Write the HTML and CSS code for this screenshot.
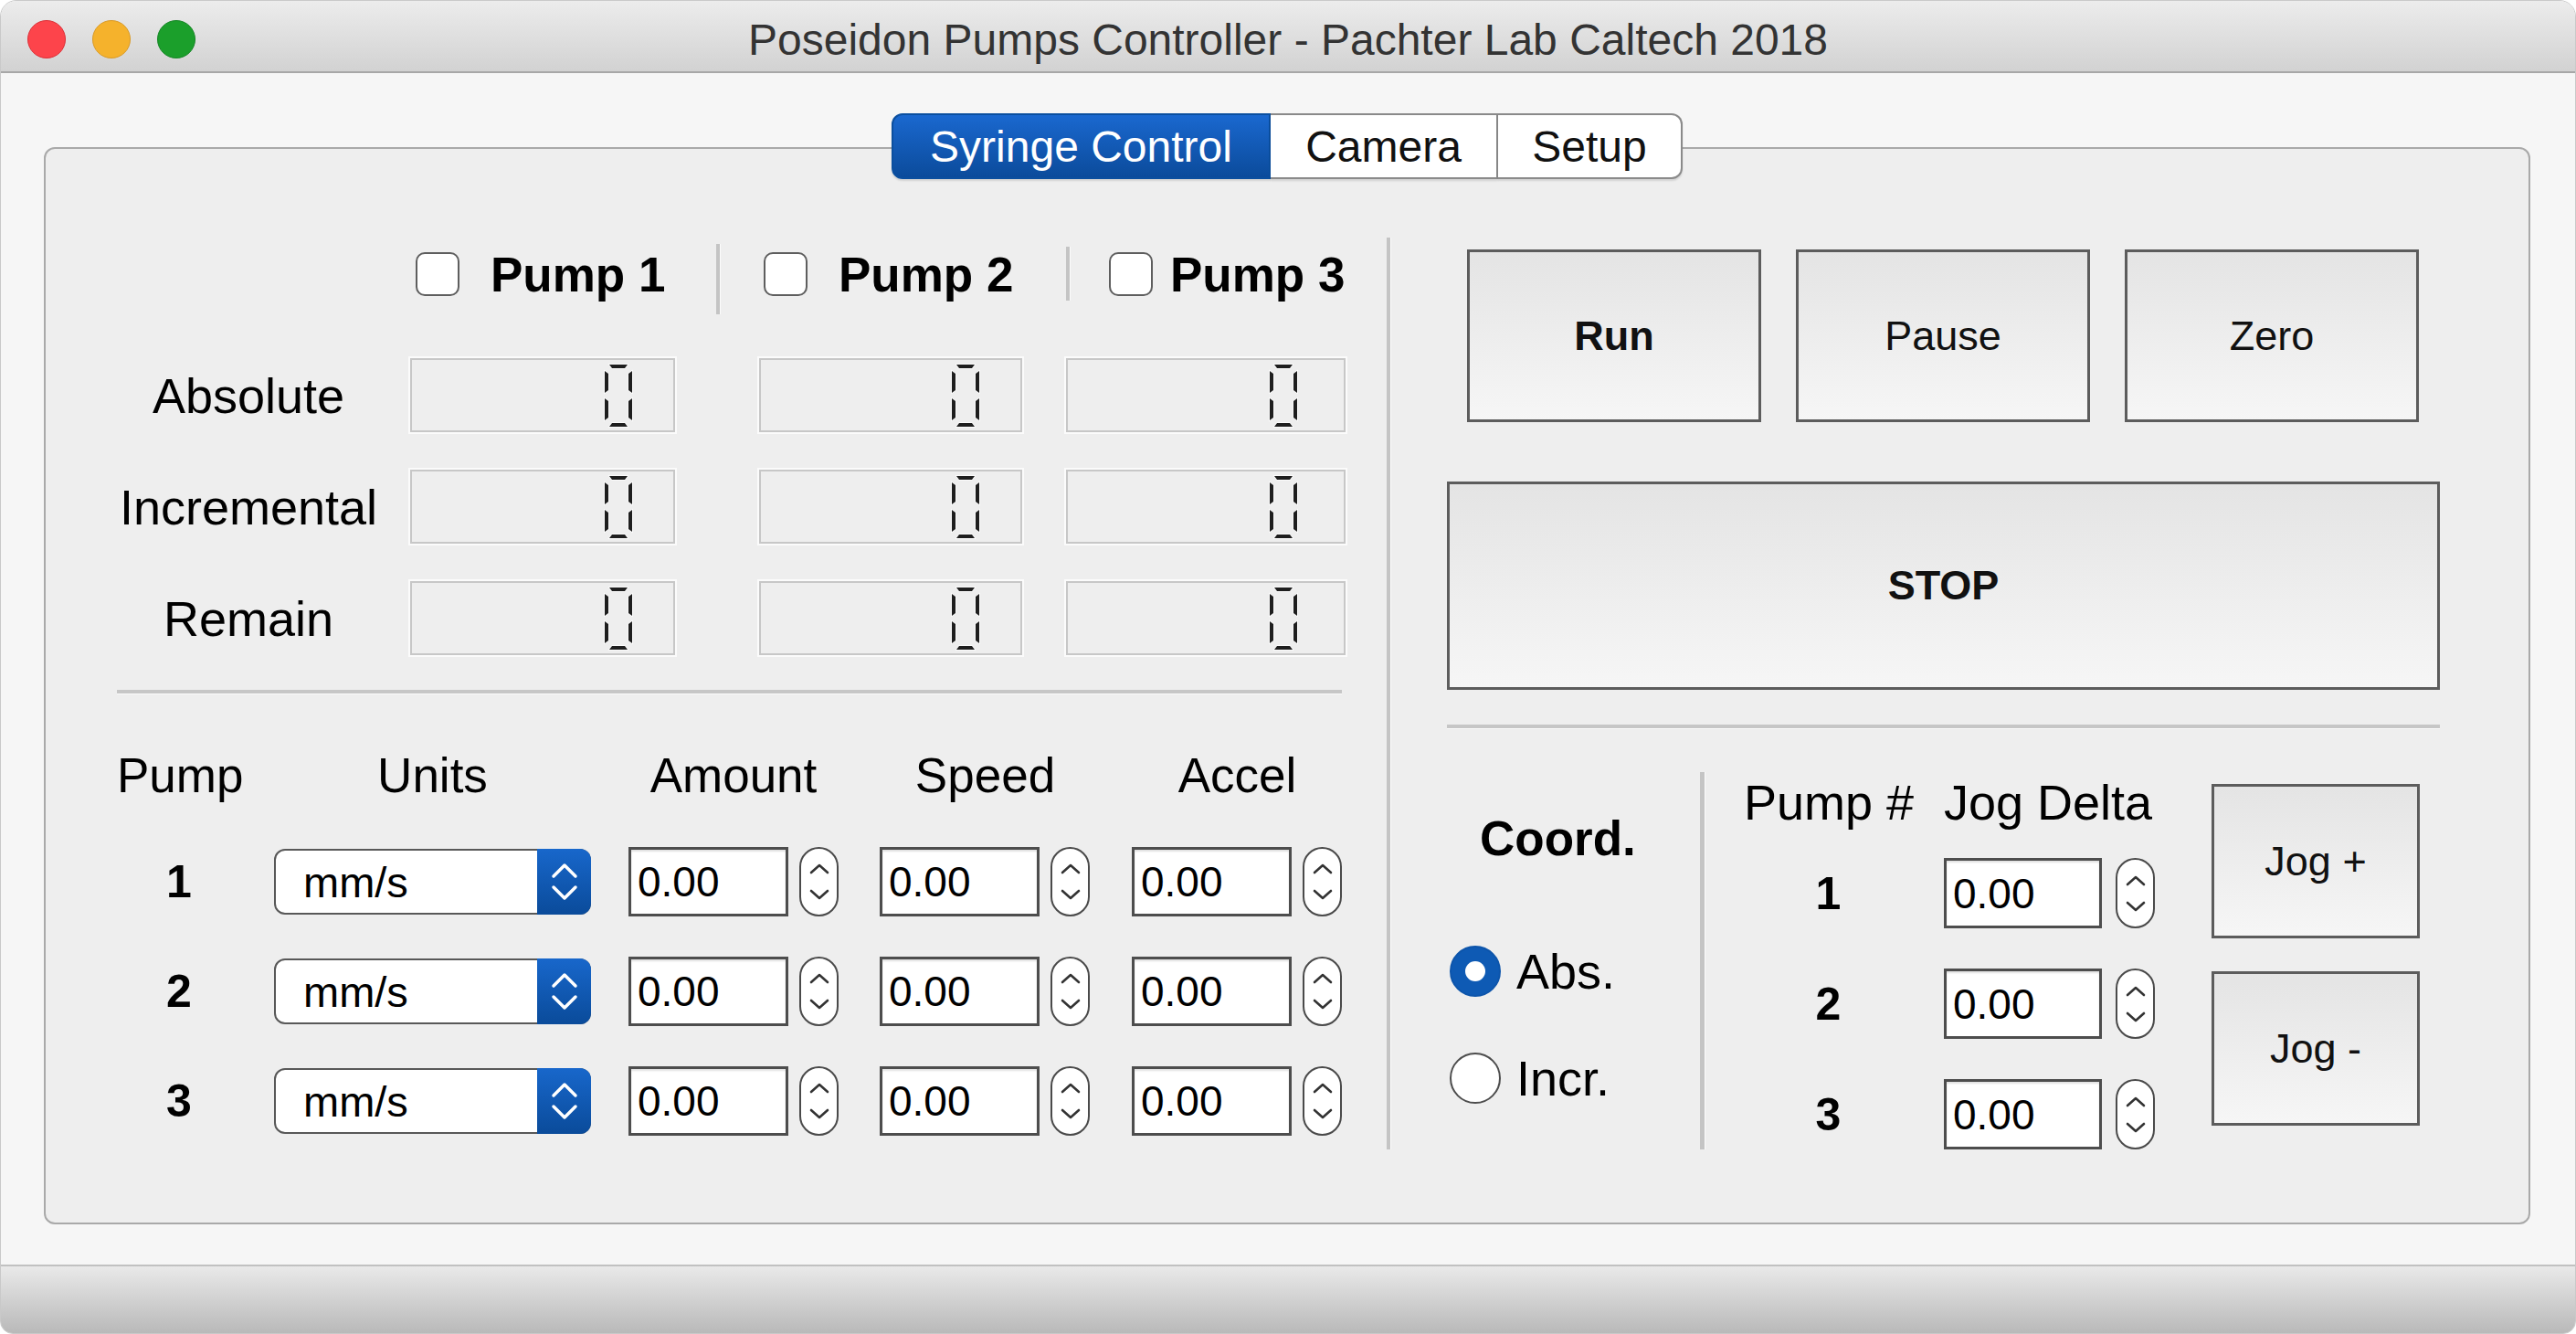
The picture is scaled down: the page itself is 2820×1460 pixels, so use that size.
FILE: index.html
```html
<!DOCTYPE html>
<html>
<head>
<meta charset="utf-8">
<title>Poseidon Pumps Controller</title>
<link rel="stylesheet" href="styles.css">
</head>
<body>
<div class="window">
  <header class="titlebar">
    <div class="lights">
      <span class="light red"></span>
      <span class="light yellow"></span>
      <span class="light green"></span>
    </div>
    <div class="title">Poseidon Pumps Controller - Pachter Lab Caltech 2018</div>
    <div></div>
  </header>

  <main class="content">
    <nav class="tabs">
      <div class="tab tab-syringe active">Syringe Control</div>
      <div class="tab tab-camera">Camera</div>
      <div class="tab tab-setup">Setup</div>
    </nav>

    <section class="pane">
      <div class="left">
        <div class="readouts">
          <div></div>
          <div class="rhead rhead-1">
            <div class="cbgroup"><span class="checkbox"></span><span>Pump 1</span></div>
            <span class="vsep sep-1"></span>
          </div>
          <div class="rhead rhead-2">
            <div class="cbgroup"><span class="checkbox"></span><span>Pump 2</span></div>
          </div>
          <div class="rhead rhead-3">
            <span class="vsep sep-2"></span>
            <div class="cbgroup tight"><span class="checkbox"></span><span>Pump 3</span></div>
          </div>

          <div class="rlabel">Absolute</div>
          <div class="lcd lcd-a"><svg class="digit" viewBox="0 0 32 70"><g class="seg"><polygon points="6,1 26,1 23,5 9,5"/><polygon points="1,8 5,11 5,29 1,32"/><polygon points="31,8 27,11 27,29 31,32"/><polygon points="1,38 5,41 5,59 1,62"/><polygon points="31,38 27,41 27,59 31,62"/><polygon points="9,65 23,65 26,69 6,69"/></g></svg></div>
          <div class="lcd lcd-b"><svg class="digit" viewBox="0 0 32 70"><g class="seg"><polygon points="6,1 26,1 23,5 9,5"/><polygon points="1,8 5,11 5,29 1,32"/><polygon points="31,8 27,11 27,29 31,32"/><polygon points="1,38 5,41 5,59 1,62"/><polygon points="31,38 27,41 27,59 31,62"/><polygon points="9,65 23,65 26,69 6,69"/></g></svg></div>
          <div class="lcd lcd-c"><svg class="digit" viewBox="0 0 32 70"><g class="seg"><polygon points="6,1 26,1 23,5 9,5"/><polygon points="1,8 5,11 5,29 1,32"/><polygon points="31,8 27,11 27,29 31,32"/><polygon points="1,38 5,41 5,59 1,62"/><polygon points="31,38 27,41 27,59 31,62"/><polygon points="9,65 23,65 26,69 6,69"/></g></svg></div>

          <div class="rlabel">Incremental</div>
          <div class="lcd lcd-a"><svg class="digit" viewBox="0 0 32 70"><g class="seg"><polygon points="6,1 26,1 23,5 9,5"/><polygon points="1,8 5,11 5,29 1,32"/><polygon points="31,8 27,11 27,29 31,32"/><polygon points="1,38 5,41 5,59 1,62"/><polygon points="31,38 27,41 27,59 31,62"/><polygon points="9,65 23,65 26,69 6,69"/></g></svg></div>
          <div class="lcd lcd-b"><svg class="digit" viewBox="0 0 32 70"><g class="seg"><polygon points="6,1 26,1 23,5 9,5"/><polygon points="1,8 5,11 5,29 1,32"/><polygon points="31,8 27,11 27,29 31,32"/><polygon points="1,38 5,41 5,59 1,62"/><polygon points="31,38 27,41 27,59 31,62"/><polygon points="9,65 23,65 26,69 6,69"/></g></svg></div>
          <div class="lcd lcd-c"><svg class="digit" viewBox="0 0 32 70"><g class="seg"><polygon points="6,1 26,1 23,5 9,5"/><polygon points="1,8 5,11 5,29 1,32"/><polygon points="31,8 27,11 27,29 31,32"/><polygon points="1,38 5,41 5,59 1,62"/><polygon points="31,38 27,41 27,59 31,62"/><polygon points="9,65 23,65 26,69 6,69"/></g></svg></div>

          <div class="rlabel">Remain</div>
          <div class="lcd lcd-a"><svg class="digit" viewBox="0 0 32 70"><g class="seg"><polygon points="6,1 26,1 23,5 9,5"/><polygon points="1,8 5,11 5,29 1,32"/><polygon points="31,8 27,11 27,29 31,32"/><polygon points="1,38 5,41 5,59 1,62"/><polygon points="31,38 27,41 27,59 31,62"/><polygon points="9,65 23,65 26,69 6,69"/></g></svg></div>
          <div class="lcd lcd-b"><svg class="digit" viewBox="0 0 32 70"><g class="seg"><polygon points="6,1 26,1 23,5 9,5"/><polygon points="1,8 5,11 5,29 1,32"/><polygon points="31,8 27,11 27,29 31,32"/><polygon points="1,38 5,41 5,59 1,62"/><polygon points="31,38 27,41 27,59 31,62"/><polygon points="9,65 23,65 26,69 6,69"/></g></svg></div>
          <div class="lcd lcd-c"><svg class="digit" viewBox="0 0 32 70"><g class="seg"><polygon points="6,1 26,1 23,5 9,5"/><polygon points="1,8 5,11 5,29 1,32"/><polygon points="31,8 27,11 27,29 31,32"/><polygon points="1,38 5,41 5,59 1,62"/><polygon points="31,38 27,41 27,59 31,62"/><polygon points="9,65 23,65 26,69 6,69"/></g></svg></div>
        </div>

        <div class="hsep left-hsep"></div>

        <div class="params">
          <div class="prow phead">
            <div class="c-pump">Pump</div>
            <div class="c-units">Units</div>
            <div class="c-amt">Amount</div>
            <div class="c-spd">Speed</div>
            <div class="c-acc">Accel</div>
          </div>

          <div class="prow">
            <div class="c-pump num">1</div>
            <div class="c-units combo"><span class="combo-text">mm/s</span><span class="combo-arrow"><svg width="30" height="46" viewBox="0 0 30 46"><path d="M3 17 L15 5 L27 17 M3 29 L15 41 L27 29"/></svg></span></div>
            <div class="c-amt spin"><span class="field">0.00</span><span class="stepper"><svg width="22" height="44" viewBox="0 0 22 44"><path d="M2 12 L11 4 L20 12 M2 32 L11 40 L20 32"/></svg></span></div>
            <div class="c-spd spin"><span class="field">0.00</span><span class="stepper"><svg width="22" height="44" viewBox="0 0 22 44"><path d="M2 12 L11 4 L20 12 M2 32 L11 40 L20 32"/></svg></span></div>
            <div class="c-acc spin"><span class="field">0.00</span><span class="stepper"><svg width="22" height="44" viewBox="0 0 22 44"><path d="M2 12 L11 4 L20 12 M2 32 L11 40 L20 32"/></svg></span></div>
          </div>

          <div class="prow">
            <div class="c-pump num">2</div>
            <div class="c-units combo"><span class="combo-text">mm/s</span><span class="combo-arrow"><svg width="30" height="46" viewBox="0 0 30 46"><path d="M3 17 L15 5 L27 17 M3 29 L15 41 L27 29"/></svg></span></div>
            <div class="c-amt spin"><span class="field">0.00</span><span class="stepper"><svg width="22" height="44" viewBox="0 0 22 44"><path d="M2 12 L11 4 L20 12 M2 32 L11 40 L20 32"/></svg></span></div>
            <div class="c-spd spin"><span class="field">0.00</span><span class="stepper"><svg width="22" height="44" viewBox="0 0 22 44"><path d="M2 12 L11 4 L20 12 M2 32 L11 40 L20 32"/></svg></span></div>
            <div class="c-acc spin"><span class="field">0.00</span><span class="stepper"><svg width="22" height="44" viewBox="0 0 22 44"><path d="M2 12 L11 4 L20 12 M2 32 L11 40 L20 32"/></svg></span></div>
          </div>

          <div class="prow">
            <div class="c-pump num">3</div>
            <div class="c-units combo"><span class="combo-text">mm/s</span><span class="combo-arrow"><svg width="30" height="46" viewBox="0 0 30 46"><path d="M3 17 L15 5 L27 17 M3 29 L15 41 L27 29"/></svg></span></div>
            <div class="c-amt spin"><span class="field">0.00</span><span class="stepper"><svg width="22" height="44" viewBox="0 0 22 44"><path d="M2 12 L11 4 L20 12 M2 32 L11 40 L20 32"/></svg></span></div>
            <div class="c-spd spin"><span class="field">0.00</span><span class="stepper"><svg width="22" height="44" viewBox="0 0 22 44"><path d="M2 12 L11 4 L20 12 M2 32 L11 40 L20 32"/></svg></span></div>
            <div class="c-acc spin"><span class="field">0.00</span><span class="stepper"><svg width="22" height="44" viewBox="0 0 22 44"><path d="M2 12 L11 4 L20 12 M2 32 L11 40 L20 32"/></svg></span></div>
          </div>
        </div>
      </div>

      <div class="vsep main-sep"></div>

      <div class="right">
        <div class="btnrow">
          <div class="btn btn-top bold">Run</div>
          <div class="btn btn-top">Pause</div>
          <div class="btn btn-top">Zero</div>
        </div>
        <div class="btn stop bold">STOP</div>
        <div class="hsep right-hsep"></div>

        <div class="lower">
          <div class="coord">
            <div class="coord-title">Coord.</div>
            <div class="radio-row first"><span class="radio on"><span class="dot"></span></span><span>Abs.</span></div>
            <div class="radio-row second"><span class="radio"></span><span>Incr.</span></div>
          </div>
          <div class="vsep lower-sep"></div>
          <div class="jog-grid">
            <div class="jhead jhead-pump">Pump #</div>
            <div class="jhead jhead-delta">Jog Delta</div>
            <div class="num jnum">1</div>
            <div class="spin jspin"><span class="field jfield">0.00</span><span class="stepper jstep"><svg width="22" height="44" viewBox="0 0 22 44"><path d="M2 12 L11 4 L20 12 M2 32 L11 40 L20 32"/></svg></span></div>
            <div class="num jnum">2</div>
            <div class="spin jspin"><span class="field jfield">0.00</span><span class="stepper jstep"><svg width="22" height="44" viewBox="0 0 22 44"><path d="M2 12 L11 4 L20 12 M2 32 L11 40 L20 32"/></svg></span></div>
            <div class="num jnum">3</div>
            <div class="spin jspin"><span class="field jfield">0.00</span><span class="stepper jstep"><svg width="22" height="44" viewBox="0 0 22 44"><path d="M2 12 L11 4 L20 12 M2 32 L11 40 L20 32"/></svg></span></div>
          </div>
          <div class="jog-btns">
            <div class="btn btn-jog">Jog +</div>
            <div class="btn btn-jog">Jog -</div>
          </div>
        </div>
      </div>
    </section>
  </main>

  <footer class="statusbar"></footer>
</div>
</body>
</html>
```

FILE: styles.css
```css
* { box-sizing: border-box; }

html, body {
  margin: 0;
  padding: 0;
  background: #ffffff;
  overflow: hidden;
}

body {
  font-family: "Liberation Sans", Arial, Helvetica, sans-serif;
  color: #111111;
}

.window {
  width: 2820px;
  height: 1460px;
  border: 1px solid #c9c9c9;
  border-radius: 18px 18px 14px 14px;
  overflow: hidden;
  background: #f6f6f6;
  display: flex;
  flex-direction: column;
}

/* ---------- title bar ---------- */
.titlebar {
  flex: none;
  height: 79px;
  display: grid;
  grid-template-columns: 1fr auto 1fr;
  align-items: start;
  padding-top: 21px;
  background: linear-gradient(#ececec, #d2d2d2);
  border-bottom: 2px solid #a7a7a7;
}

.lights {
  display: flex;
  gap: 29px;
  padding-left: 29px;
}

.light {
  width: 42px;
  height: 42px;
  border-radius: 50%;
}
.light.red { background: #fd444b; border: 1.5px solid #dc2f36; }
.light.yellow { background: #f5b22c; border: 1.5px solid #d99a26; }
.light.green { background: #1b9f2b; border: 1.5px solid #158625; }

.title {
  font-size: 48px;
  line-height: 44px;
  color: #333333;
  white-space: nowrap;
}

/* ---------- content + tabs ---------- */
.content {
  flex: 1;
  display: flex;
  flex-direction: column;
  padding: 44px 49px 44px 47px;
}

.tabs {
  display: flex;
  justify-content: center;
  height: 72px;
  margin-bottom: -35px;
  position: relative;
  z-index: 1;
}

.tab {
  height: 72px;
  display: flex;
  align-items: center;
  justify-content: center;
  font-size: 48px;
  color: #111;
  background: #ffffff;
  border: 2px solid #8a8a8a;
  border-left: none;
  box-shadow: 0 2px 2px rgba(0, 0, 0, 0.12);
}
.tab-syringe { width: 415px; border-left: 2px solid #0b4f9f; border-radius: 12px 0 0 12px; }
.tab-camera { width: 249px; }
.tab-setup { width: 202px; border-radius: 0 12px 12px 0; }
.tab.active {
  color: #ffffff;
  background: linear-gradient(#1a68cf, #0b4b9b);
  border-color: #0b4f9f;
}

.pane {
  flex: 1;
  display: flex;
  align-items: flex-start;
  padding: 97px 0 0 78px;
  border: 2px solid #a9a9a9;
  border-radius: 12px;
  background: #eeeeee;
}

/* separators */
.vsep {
  display: block;
  width: 4px;
  background: #c4c4c4;
  box-shadow: 1px 0 0 #fbfbfb;
  flex: none;
}
.hsep {
  height: 4px;
  background: #c6c6c6;
  box-shadow: 0 1px 0 #fbfbfb;
}

.main-sep { height: 998px; margin-left: 45px; }

/* ---------- left side ---------- */
.left { width: 1345px; margin-top: 2px; }

.readouts {
  display: grid;
  grid-template-columns: 321px 382px 336px 306px;
  grid-template-rows: 89px repeat(3, 81px);
  row-gap: 41px;
}

.rhead { display: flex; align-items: flex-start; }
.rhead-1 { padding-left: 6px; }
.rhead-2 { padding-left: 5px; }

.sep-1 { height: 77px; margin: 5px 43px 0 auto; }
.sep-2 { height: 59px; margin: 8px 0 0 0; }

.cbgroup {
  display: flex;
  align-items: center;
  gap: 34px;
  height: 76px;
  font-size: 53px;
  font-weight: bold;
  color: #000;
}
.cbgroup.tight { gap: 19px; margin-left: 43px; }

.checkbox {
  width: 48px;
  height: 48px;
  border: 2px solid #5e5e5e;
  border-radius: 10px;
  background: #ffffff;
}

.rlabel {
  width: 288px;
  display: flex;
  align-items: center;
  justify-content: center;
  font-size: 54px;
  color: #000;
}

.lcd {
  height: 81px;
  display: flex;
  align-items: center;
  justify-content: flex-end;
  padding-right: 44px;
  border: 2px solid #c7c7c7;
  box-shadow: 0 0 0 2px #fbfbfb;
  background: #eeeeee;
}
.lcd-a { width: 290px; }
.lcd-b { width: 288px; }
.lcd-c { width: 306px; padding-right: 50px; }

.digit { width: 32px; height: 70px; }
.seg polygon {
  fill: #1e1e1e;
  stroke: #ffffff;
  stroke-width: 1.4;
  paint-order: stroke;
}

.left-hsep { width: 1341px; margin-top: 38px; }

.params {
  display: flex;
  flex-direction: column;
  gap: 44px;
  margin-top: 54px;
}

.prow {
  display: flex;
  align-items: center;
  height: 76px;
}
.phead {
  height: 70px;
  font-size: 53px;
  color: #000;
}
.phead > div { text-align: center; }

.c-pump { width: 136px; text-align: center; }
.c-units { width: 347px; margin-left: 36px; }
.c-amt { width: 230px; margin-left: 41px; }
.c-spd { width: 231px; margin-left: 45px; }
.c-acc { width: 231px; margin-left: 45px; }

.num {
  font-size: 50px;
  font-weight: bold;
  color: #000;
}

/* combo box */
.combo {
  display: flex;
  height: 72px;
  border: 2px solid #585858;
  border-radius: 12px;
  background: #ffffff;
}
.combo-text {
  flex: 1;
  display: flex;
  align-items: center;
  padding-left: 30px;
  font-size: 47px;
  color: #000;
}
.combo-arrow {
  width: 59px;
  margin: -2px -2px -2px 0;
  border-radius: 0 12px 12px 0;
  background: linear-gradient(#1867cb, #0a4b9a);
  display: flex;
  align-items: center;
  justify-content: center;
}
.combo-arrow path {
  fill: none;
  stroke: #ffffff;
  stroke-width: 3.5;
  stroke-linecap: round;
  stroke-linejoin: round;
}

/* spin box */
.spin {
  display: flex;
  align-items: center;
  gap: 12px;
}
.field {
  width: 175px;
  height: 76px;
  display: flex;
  align-items: center;
  padding-left: 7px;
  font-size: 46px;
  color: #000;
  background: #ffffff;
  border: 3px solid #4d4d4d;
  box-shadow: inset 0 2px 2px rgba(0, 0, 0, 0.12);
}
.stepper {
  width: 43px;
  height: 76px;
  display: flex;
  align-items: center;
  justify-content: center;
  background: #ffffff;
  border: 2px solid #4a4a4a;
  border-radius: 22px;
}
.stepper path {
  fill: none;
  stroke: #333333;
  stroke-width: 2.6;
  stroke-linecap: round;
  stroke-linejoin: round;
}

/* ---------- right side ---------- */
.right { width: 1087px; margin-left: 62px; margin-top: 13px; }

.btnrow {
  display: flex;
  justify-content: space-between;
  padding: 0 23px 0 22px;
}

.btn {
  display: flex;
  align-items: center;
  justify-content: center;
  font-size: 45px;
  color: #111;
  border: 3px solid #5c5c5c;
  background: linear-gradient(#e4e4e4, #f6f6f6);
}
.bold { font-weight: bold; }
.btn-top { width: 322px; height: 189px; }
.stop { height: 228px; margin-top: 65px; }

.right-hsep { margin-top: 38px; }

.lower {
  display: flex;
  align-items: flex-start;
  margin-top: 48px;
}

.coord { width: 277px; }
.coord-title {
  height: 56px;
  line-height: 56px;
  margin-top: 45px;
  padding-left: 36px;
  font-size: 53px;
  font-weight: bold;
  color: #000;
}
.radio-row {
  display: flex;
  align-items: center;
  gap: 17px;
  height: 56px;
  padding-left: 3px;
  font-size: 54px;
  color: #000;
}
.radio-row.first { margin-top: 89px; }
.radio-row.second { margin-top: 61px; }

.radio {
  width: 56px;
  height: 56px;
  border-radius: 50%;
  border: 2.5px solid #4d4d4d;
  background: #ffffff;
  display: flex;
  align-items: center;
  justify-content: center;
}
.radio.on { background: #0e5ab4; border-color: #0d55ab; }
.dot {
  width: 22px;
  height: 22px;
  border-radius: 50%;
  background: #ffffff;
}

.lower-sep { width: 5px; height: 413px; }

.jog-grid {
  display: grid;
  grid-template-columns: 185px 231px;
  grid-template-rows: 34px repeat(3, 77px);
  column-gap: 34px;
  row-gap: 44px;
  margin-left: 43px;
  margin-top: 16px;
}
.jhead {
  line-height: 34px;
  font-size: 54px;
  color: #000;
  white-space: nowrap;
}
.jhead-pump { text-align: center; }
.jhead-delta { text-align: left; }

.jnum {
  display: flex;
  align-items: center;
  justify-content: center;
}

.jspin { gap: 15px; }
.jfield { width: 173px; height: 77px; }
.jstep { height: 77px; }

.jog-btns {
  display: flex;
  flex-direction: column;
  gap: 36px;
  margin-left: 62px;
  margin-top: 13px;
}
.btn-jog { width: 228px; height: 169px; }

/* ---------- status bar ---------- */
.statusbar {
  flex: none;
  height: 75px;
  border-top: 2px solid #c1c1c1;
  background: linear-gradient(#e9e9e9, #b9b9b9);
}
```
